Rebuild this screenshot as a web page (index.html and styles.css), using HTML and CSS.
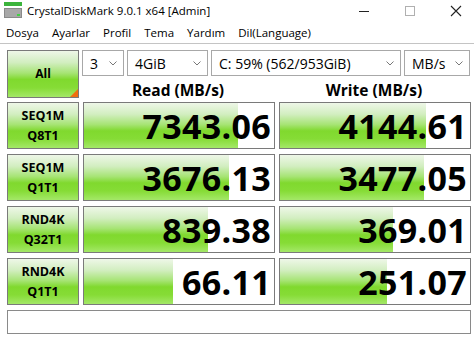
FILE: index.html
```html
<!DOCTYPE html>
<html lang="tr">
<head>
    <meta charset="UTF-8">
    <title>CrystalDiskMark 9.0.1 x64 [Admin]</title>
    <link rel="stylesheet" href="styles.css">
</head>
<body>
    <div class="titlebar">
        <svg class="app-icon" width="18" height="16" viewBox="0 0 18 16">
            <rect x="0" y="0" width="18" height="4" fill="#3cb43c"/>
            <rect x="0" y="6" width="18" height="10" fill="#8a8a8a"/>
            <rect x="1" y="7" width="16" height="8" fill="#a8a8a8"/>
            <rect x="13" y="12" width="3" height="2" fill="#44d044"/>
        </svg>
        <span class="title">CrystalDiskMark 9.0.1 x64 [Admin]</span>
        <div class="controls">
            <svg width="12" height="12" viewBox="0 0 12 12"><line x1="1" y1="6.5" x2="11" y2="6.5" stroke="#222" stroke-width="1"/></svg>
            <svg width="12" height="12" viewBox="0 0 12 12"><rect x="1.5" y="1.5" width="9" height="9" fill="none" stroke="#b0b0b0" stroke-width="1"/></svg>
            <svg width="12" height="12" viewBox="0 0 12 12"><path d="M1 1 L11 11 M11 1 L1 11" stroke="#222" stroke-width="1.1"/></svg>
        </div>
    </div>
    <div class="menubar">
        <span>Dosya</span>
        <span>Ayarlar</span>
        <span>Profil</span>
        <span>Tema</span>
        <span>Yardım</span>
        <span>Dil(Language)</span>
    </div>

    <div class="main">
        <div class="btn all">All</div>
        <div class="top-right">
            <div class="combos">
                <div class="combo c-count">3<svg class="chev" width="8" height="5" viewBox="0 0 8 5"><polyline points="0.5,0.5 4,4 7.5,0.5" fill="none" stroke="#777" stroke-width="1"/></svg></div>
                <div class="combo c-size">4GiB<svg class="chev" width="8" height="5" viewBox="0 0 8 5"><polyline points="0.5,0.5 4,4 7.5,0.5" fill="none" stroke="#777" stroke-width="1"/></svg></div>
                <div class="combo c-drive">C: 59% (562/953GiB)<svg class="chev" width="8" height="5" viewBox="0 0 8 5"><polyline points="0.5,0.5 4,4 7.5,0.5" fill="none" stroke="#777" stroke-width="1"/></svg></div>
                <div class="combo c-unit">MB/s<svg class="chev" width="8" height="5" viewBox="0 0 8 5"><polyline points="0.5,0.5 4,4 7.5,0.5" fill="none" stroke="#777" stroke-width="1"/></svg></div>
            </div>
            <div class="heads">
                <div class="head">Read (MB/s)</div>
                <div class="head">Write (MB/s)</div>
            </div>
        </div>

        <div class="btn label">SEQ1M<br>Q8T1</div>
        <div class="cell"><div class="bar" style="width: 154px"></div><span class="val">7343.06</span></div>
        <div class="cell"><div class="bar" style="width: 146px"></div><span class="val">4144.61</span></div>

        <div class="btn label">SEQ1M<br>Q1T1</div>
        <div class="cell"><div class="bar" style="width: 145px"></div><span class="val">3676.13</span></div>
        <div class="cell"><div class="bar" style="width: 144px"></div><span class="val">3477.05</span></div>

        <div class="btn label">RND4K<br>Q32T1</div>
        <div class="cell"><div class="bar" style="width: 124px"></div><span class="val">839.38</span></div>
        <div class="cell"><div class="bar" style="width: 113px"></div><span class="val">369.01</span></div>

        <div class="btn label">RND4K<br>Q1T1</div>
        <div class="cell"><div class="bar" style="width: 89px"></div><span class="val">66.11</span></div>
        <div class="cell"><div class="bar" style="width: 107px"></div><span class="val">251.07</span></div>

        <div class="status"></div>
    </div>
</body>
</html>
```

FILE: styles.css
```css
body {
    margin: 0;
    width: 474px;
    height: 337px;
    overflow: hidden;
    background-color: #fff;
    font-family: "Open Sans", "Noto Sans", sans-serif;
    color: #000;
}

.titlebar {
    height: 20px;
    display: flex;
    align-items: center;
    padding-left: 4px;
}

.app-icon {
    margin-right: 5px;
}

.title {
    font-size: 11.5px;
}

.controls {
    margin-left: auto;
    display: flex;
    gap: 34px;
    padding-right: 12px;
    padding-top: 2px;
}

.menubar {
    height: 21px;
    display: flex;
    align-items: center;
    gap: 13px;
    padding: 2px 0 0 6px;
    font-size: 11.5px;
    border-bottom: 1px solid #c4c4c4;
}

.main {
    display: grid;
    grid-template-columns: 72px 192px 192px;
    grid-template-rows: repeat(5, 47px) 24px;
    column-gap: 4px;
    row-gap: 5px;
    padding: 6px 0 0 7px;
}

.btn {
    box-sizing: border-box;
    border: 1px solid #7a7a7a;
    background: linear-gradient(to bottom, #eef7e8 0%, #d2eec0 25%, #a6e474 48%, #80d92e 62%, #86dc36 80%, #a4e868 100%);
    display: flex;
    align-items: center;
    justify-content: center;
    text-align: center;
    font-weight: bold;
    font-size: 12.5px;
    line-height: 20px;
}

.all {
    position: relative;
    height: 48px;
    font-size: 12px;
}

.all::after {
    content: "";
    position: absolute;
    right: 0;
    bottom: 0;
    border-style: solid;
    border-width: 0 0 8px 8px;
    border-color: transparent transparent #f07010 transparent;
}

.top-right {
    grid-column: 2 / 4;
    display: flex;
    flex-direction: column;
    margin-left: -1px;
}

.combos {
    display: flex;
    gap: 3px;
    height: 26px;
}

.combo {
    box-sizing: border-box;
    height: 26px;
    border: 1px solid #a8a8a8;
    display: flex;
    align-items: center;
    justify-content: space-between;
    padding: 0 6px 0 7px;
    font-size: 14px;
}

.c-count { width: 42px; }
.c-size { width: 81px; }
.c-drive { width: 190px; }
.c-unit { width: 66px; }

.chev {
    margin-top: 1px;
}

.heads {
    display: flex;
    gap: 4px;
    flex: 1;
}

.head {
    width: 192px;
    text-align: center;
    font-weight: bold;
    font-size: 15.5px;
    line-height: 22px;
    padding-top: 3px;
}

.cell {
    position: relative;
    box-sizing: border-box;
    border: 1px solid #7a7a7a;
    background-color: #fff;
    display: flex;
    align-items: center;
    justify-content: flex-end;
    padding-right: 3px;
}

.bar {
    position: absolute;
    left: 0;
    top: 0;
    bottom: 0;
    background: linear-gradient(to bottom, #eef7e8 0%, #d2eec0 25%, #a6e474 48%, #80d92e 62%, #86dc36 80%, #a4e868 100%);
}

.val {
    position: relative;
    font-weight: bold;
    font-size: 34px;
    line-height: 1;
    letter-spacing: 0.3px;
}

.status {
    grid-column: 1 / 4;
    box-sizing: border-box;
    border: 1px solid #8a8a8a;
    background-color: #fff;
}
```
